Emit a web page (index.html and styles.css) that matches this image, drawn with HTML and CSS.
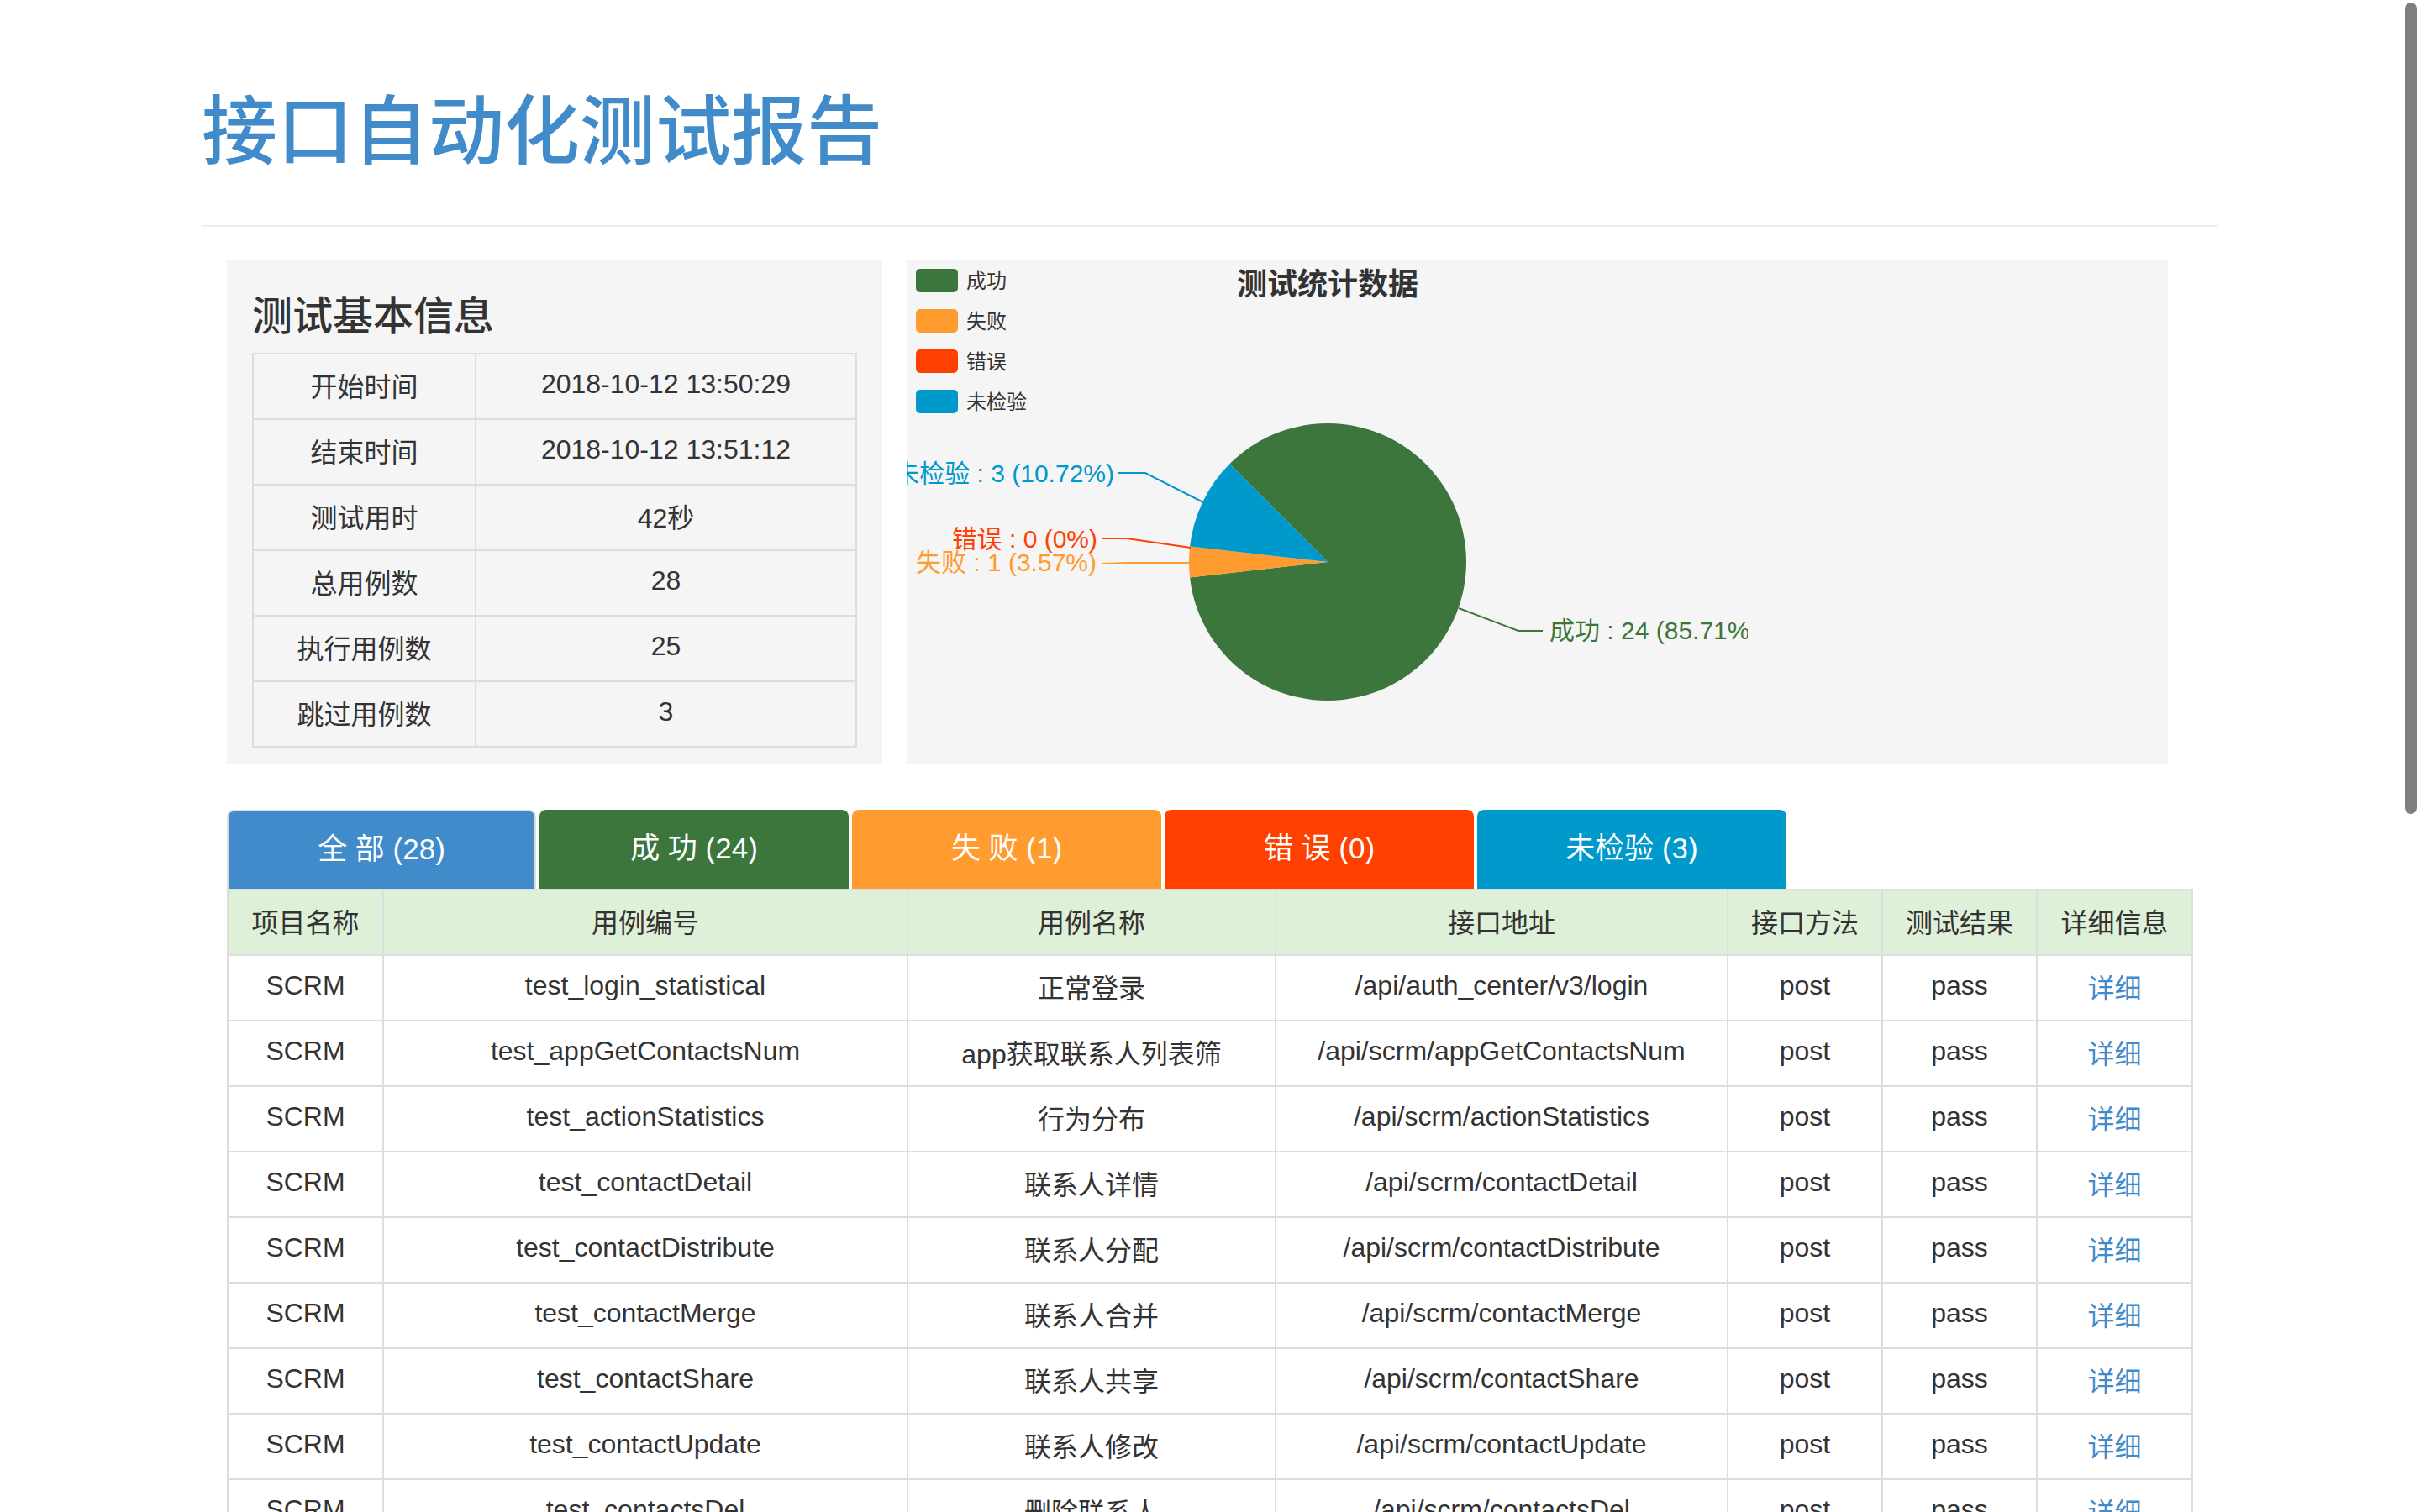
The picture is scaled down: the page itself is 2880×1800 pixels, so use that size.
FILE: index.html
```html
<!DOCTYPE html>
<html lang="zh-CN">
<head>
<meta charset="utf-8">
<title>接口自动化测试报告</title>
<link rel="stylesheet" href="styles.css">
</head>
<body>
<div class="page">
  <h1 class="title">接口自动化测试报告</h1>
  <hr class="rule">
  <div class="summary">
    <section class="info-panel">
      <h2 class="info-heading">测试基本信息</h2>
      <table class="info-table">
        <colgroup><col class="info-key"><col class="info-val"></colgroup>
        <tr><td>开始时间</td><td>2018-10-12 13:50:29</td></tr>
        <tr><td>结束时间</td><td>2018-10-12 13:51:12</td></tr>
        <tr><td>测试用时</td><td>42秒</td></tr>
        <tr><td>总用例数</td><td>28</td></tr>
        <tr><td>执行用例数</td><td>25</td></tr>
        <tr><td>跳过用例数</td><td>3</td></tr>
      </table>
    </section>
    <section class="chart-panel">
      <svg class="chart" width="1000" height="600" viewBox="0 0 1000 600">
        <g transform="translate(0,-2)">
          <g class="legend">
            <rect x="10" y="12" width="50" height="28" rx="5" fill="#3c763d"/>
            <text x="70" y="26">成功</text>
            <rect x="10" y="60" width="50" height="28" rx="5" fill="#ff9b2f"/>
            <text x="70" y="74">失败</text>
            <rect x="10" y="108" width="50" height="28" rx="5" fill="#ff4000"/>
            <text x="70" y="122">错误</text>
            <rect x="10" y="156" width="50" height="28" rx="5" fill="#0099cc"/>
            <text x="70" y="170">未检验</text>
          </g>
          <text class="chart-title" x="500" y="27" text-anchor="middle">测试统计数据</text>
          <path fill="#3c763d" d="M500 361 L383.33 244.33 A165 165 0 1 1 336.04 379.47 Z"/>
          <path fill="#ff9b2f" d="M500 361 L336.04 379.47 A165 165 0 0 1 336.04 342.53 Z"/>
          <path fill="#0099cc" d="M500 361 L336.04 342.53 A165 165 0 0 1 383.33 244.33 Z"/>
          <g class="leader">
            <polyline points="352,290 283,255 251,255" stroke="#0099cc"/>
            <polyline points="337,344 261,333 232,333" stroke="#ff4000"/>
            <polyline points="335,362 261,362 232,363" stroke="#ff9b2f"/>
            <polyline points="656,416 727,443 756,443" stroke="#3c763d"/>
          </g>
          <g class="pie-label">
            <text x="246" y="255" text-anchor="end" fill="#0099cc">未检验 : 3 (10.72%)</text>
            <text x="226" y="333" text-anchor="end" fill="#ff4000">错误 : 0 (0%)</text>
            <text x="225" y="361" text-anchor="end" fill="#ff9b2f">失败 : 1 (3.57%)</text>
            <text x="764" y="442" fill="#3c763d">成功 : 24 (85.71%)</text>
          </g>
        </g>
      </svg>
    </section>
  </div>

  <nav class="tabs">
    <a class="tab tab-all">全 部 (28)</a>
    <a class="tab tab-pass">成 功 (24)</a>
    <a class="tab tab-fail">失 败 (1)</a>
    <a class="tab tab-error">错 误 (0)</a>
    <a class="tab tab-skip">未检验 (3)</a>
  </nav>

  <table class="cases">
    <colgroup>
      <col class="c-proj"><col class="c-id"><col class="c-name"><col class="c-url"><col class="c-method"><col class="c-result"><col class="c-detail">
    </colgroup>
    <thead>
      <tr><th>项目名称</th><th>用例编号</th><th>用例名称</th><th>接口地址</th><th>接口方法</th><th>测试结果</th><th>详细信息</th></tr>
    </thead>
    <tbody>
      <tr><td>SCRM</td><td>test_login_statistical</td><td>正常登录</td><td>/api/auth_center/v3/login</td><td>post</td><td>pass</td><td><a class="detail">详细</a></td></tr>
      <tr><td>SCRM</td><td>test_appGetContactsNum</td><td>app获取联系人列表筛</td><td>/api/scrm/appGetContactsNum</td><td>post</td><td>pass</td><td><a class="detail">详细</a></td></tr>
      <tr><td>SCRM</td><td>test_actionStatistics</td><td>行为分布</td><td>/api/scrm/actionStatistics</td><td>post</td><td>pass</td><td><a class="detail">详细</a></td></tr>
      <tr><td>SCRM</td><td>test_contactDetail</td><td>联系人详情</td><td>/api/scrm/contactDetail</td><td>post</td><td>pass</td><td><a class="detail">详细</a></td></tr>
      <tr><td>SCRM</td><td>test_contactDistribute</td><td>联系人分配</td><td>/api/scrm/contactDistribute</td><td>post</td><td>pass</td><td><a class="detail">详细</a></td></tr>
      <tr><td>SCRM</td><td>test_contactMerge</td><td>联系人合并</td><td>/api/scrm/contactMerge</td><td>post</td><td>pass</td><td><a class="detail">详细</a></td></tr>
      <tr><td>SCRM</td><td>test_contactShare</td><td>联系人共享</td><td>/api/scrm/contactShare</td><td>post</td><td>pass</td><td><a class="detail">详细</a></td></tr>
      <tr><td>SCRM</td><td>test_contactUpdate</td><td>联系人修改</td><td>/api/scrm/contactUpdate</td><td>post</td><td>pass</td><td><a class="detail">详细</a></td></tr>
      <tr><td>SCRM</td><td>test_contactsDel</td><td>删除联系人</td><td>/api/scrm/contactsDel</td><td>post</td><td>pass</td><td><a class="detail">详细</a></td></tr>
    </tbody>
  </table>
</div>
<div class="scrollbar"></div>
</body>
</html>
```

FILE: styles.css
```css
html, body {
  margin: 0;
  padding: 0;
  background: #fff;
}
body {
  width: 2880px;
  height: 1800px;
  overflow: hidden;
  position: relative;
  font-family: "Liberation Sans", "Noto Sans CJK SC", sans-serif;
  color: #333;
}
.page {
  width: 2400px;
  padding-left: 240px;
}
.title {
  margin: 0;
  padding-top: 100px;
  font-family: "Noto Sans CJK SC", sans-serif;
  font-size: 90px;
  line-height: 99px;
  font-weight: 500;
  color: #428bca;
}
.rule {
  margin: 69px 0 0;
  height: 0;
  border: 0;
  border-top: 2px solid #eee;
}
.summary {
  display: flex;
  gap: 30px;
  margin: 40px 0 0 30px;
}
.info-panel {
  box-sizing: border-box;
  width: 780px;
  height: 600px;
  padding: 32px 30px 0;
  background: #f5f5f5;
}
.info-heading {
  margin: 0 0 18px;
  font-family: "Noto Sans CJK SC", sans-serif;
  font-size: 48px;
  line-height: 60px;
  font-weight: 500;
  color: #333;
}
.info-table {
  width: 720px;
  border-collapse: collapse;
  table-layout: fixed;
}
.info-key { width: 265px; }
.info-table td {
  height: 71px;
  padding: 0 0 5px;
  border: 2px solid #ddd;
  text-align: center;
  font-size: 32px;
  color: #333;
}
.chart-panel {
  width: 1500px;
  height: 600px;
  background: #f5f5f5;
}
.chart {
  display: block;
  overflow: hidden;
  font-family: "Liberation Sans", "Noto Sans CJK SC", sans-serif;
}
.legend text {
  font-size: 24px;
  fill: #333;
  dominant-baseline: central;
}
.chart-title {
  font-family: "Noto Sans CJK SC", sans-serif;
  font-size: 36px;
  font-weight: 700;
  fill: #333;
  dominant-baseline: central;
}
.leader polyline {
  fill: none;
  stroke-width: 2;
}
.pie-label text {
  font-size: 30px;
  dominant-baseline: central;
}
.tabs {
  display: flex;
  gap: 4px;
  height: 94px;
  margin: 54px 0 0 30px;
}
.tab {
  box-sizing: border-box;
  width: 368px;
  display: flex;
  align-items: center;
  justify-content: center;
  padding-bottom: 9px;
  border-radius: 8px 8px 0 0;
  color: #fff;
  font-size: 35px;
}
.tab-all {
  background: #428bca;
  border: 2px solid #ddd;
  border-bottom: 0;
}
.tab-pass { background: #3c763d; }
.tab-fail { background: #ff9b2f; }
.tab-error { background: #ff4000; }
.tab-skip { background: #0099cc; }
.cases {
  width: 2338px;
  margin-left: 30px;
  border-collapse: collapse;
  table-layout: fixed;
  font-size: 32px;
  color: #333;
}
.c-proj { width: 185px; }
.c-id { width: 624px; }
.c-name { width: 438px; }
.c-url { width: 538px; }
.c-method { width: 184px; }
.c-result { width: 184px; }
.c-detail { width: 185px; }
.cases th,
.cases td {
  height: 71px;
  padding: 0 0 5px;
  border: 2px solid #ddd;
  text-align: center;
  font-weight: 400;
  white-space: nowrap;
}
.cases th {
  background: #dff0d8;
}
.detail {
  color: #428bca;
}
.scrollbar {
  position: absolute;
  top: 3px;
  right: 4px;
  width: 14px;
  height: 966px;
  border-radius: 7px;
  background: #7f7f7f;
}
```
